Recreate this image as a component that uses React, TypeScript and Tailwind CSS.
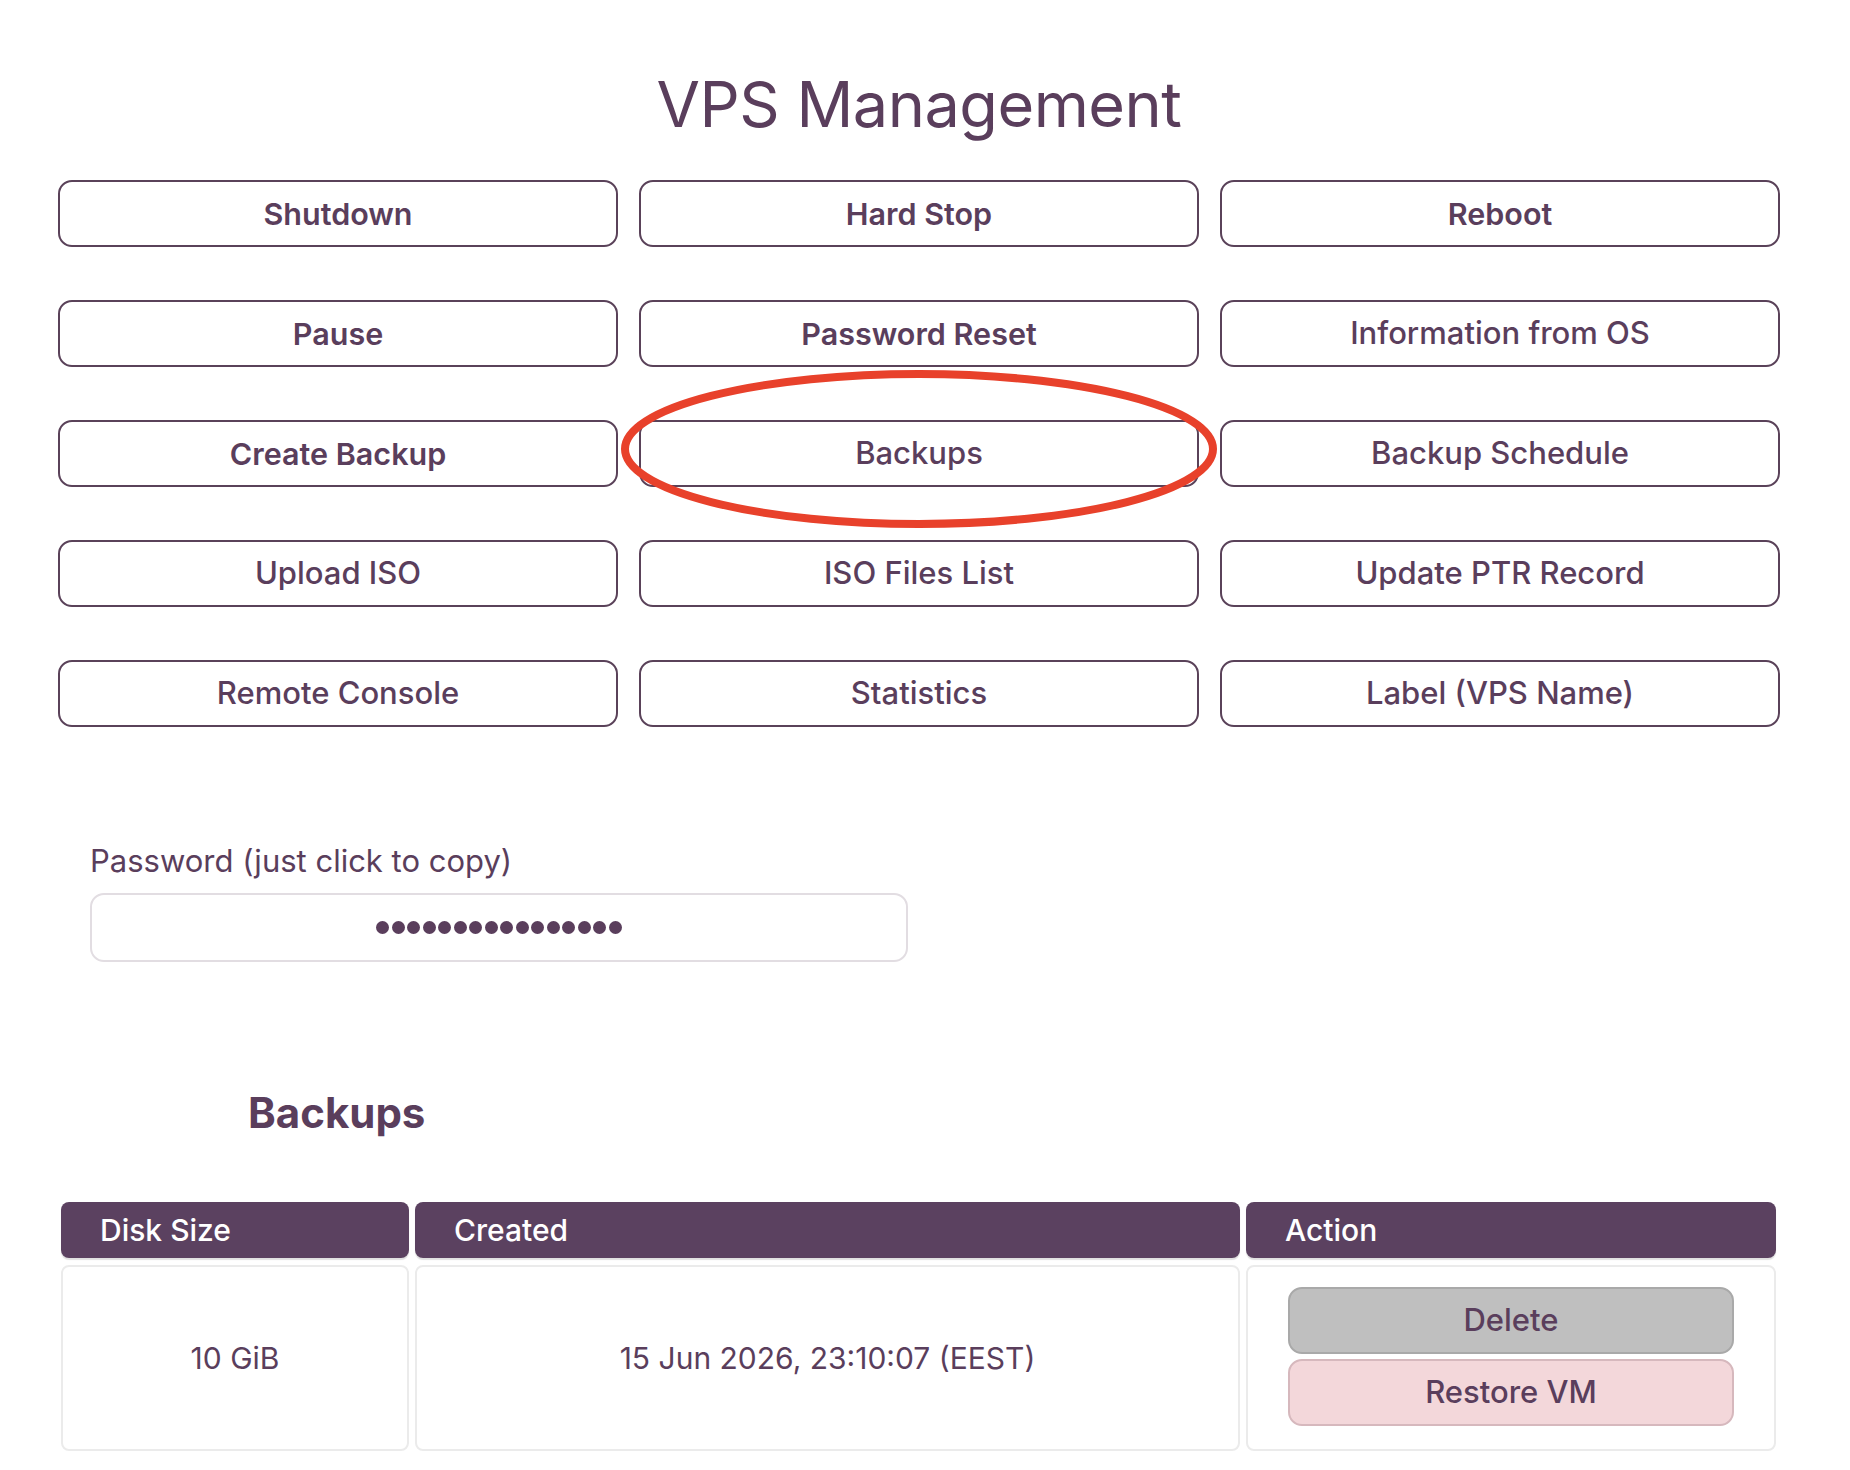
import React from 'react';

const actions = [
  { label: 'Shutdown', bold: true },
  { label: 'Hard Stop', bold: true },
  { label: 'Reboot', bold: true },
  { label: 'Pause', bold: true },
  { label: 'Password Reset', bold: true },
  { label: 'Information from OS', bold: false },
  { label: 'Create Backup', bold: true },
  { label: 'Backups', bold: false },
  { label: 'Backup Schedule', bold: false },
  { label: 'Upload ISO', bold: false },
  { label: 'ISO Files List', bold: false },
  { label: 'Update PTR Record', bold: false },
  { label: 'Remote Console', bold: false },
  { label: 'Statistics', bold: false },
  { label: 'Label (VPS Name)', bold: false },
];

const App: React.FC = () => {
  return (
    <div className="relative min-h-screen bg-white text-[#5a3e5c] font-['Inter','Noto_Sans',sans-serif]">
      <div className="flex flex-col pl-[58px] pr-[70px] pt-[66px] pb-[19px]">
        <h1 className="text-center text-[63px] leading-[77px] font-normal tracking-[-0.5px]">VPS Management</h1>

        <div className="grid grid-cols-3 gap-x-[21px] gap-y-[53px] mt-[37px]">
          {actions.map(({ label, bold }) => (
            <button
              key={label}
              className={`h-[67px] rounded-[14px] border-2 border-[#5a4259] bg-white ${
                bold ? 'text-[30.5px] font-semibold' : 'text-[31px] font-medium'
              }`}
            >
              {label}
            </button>
          ))}
        </div>

        <div className="ml-[32px] mt-[117px] w-[818px]">
          <label className="block text-[31px] leading-[34px]">Password (just click to copy)</label>
          <div className="mt-[15px] h-[69px] rounded-[14px] border-2 border-[#e2dde2] flex items-center justify-center gap-[2.5px] cursor-pointer">
            {Array.from({ length: 16 }).map((_, i) => (
              <span key={i} className="w-[13px] h-[13px] rounded-full bg-[#5a3e5c]" />
            ))}
          </div>
        </div>

        <h2 className="ml-[190px] mt-[127px] text-[42px] leading-[48px] font-bold">Backups</h2>

        <div className="ml-[3px] mt-[65px] grid grid-cols-[348px_825px_530px] gap-x-[6px] gap-y-[7px]">
          {['Disk Size', 'Created', 'Action'].map((h) => (
            <div
              key={h}
              className="h-[56px] rounded-[8px] bg-[#5b4160] text-white text-[30px] font-medium pl-[39px] flex items-center shadow-[0_2px_1px_rgba(0,0,0,0.12)]"
            >
              {h}
            </div>
          ))}
          <div className="h-[186px] rounded-[8px] border-2 border-[#ebebeb] flex items-center justify-center text-[30px]">
            10 GiB
          </div>
          <div className="h-[186px] rounded-[8px] border-2 border-[#ebebeb] flex items-center justify-center text-[30px]">
            15 Jun 2026, 23:10:07 (EEST)
          </div>
          <div className="h-[186px] rounded-[8px] border-2 border-[#ebebeb] flex flex-col justify-center gap-[5px] pl-[40px] pr-[40px] pb-[3px]">
            <button className="h-[67px] rounded-[14px] border-2 border-[#a9a9a9] bg-[#bfbfbf] text-[31px] font-medium">
              Delete
            </button>
            <button className="h-[67px] rounded-[14px] border-2 border-[#d6b8bd] bg-[#f3d7da] text-[31px] font-medium">
              Restore VM
            </button>
          </div>
        </div>
      </div>

      <svg
        className="absolute left-[614px] top-[366px] pointer-events-none"
        width="610"
        height="166"
        viewBox="0 0 610 166"
      >
        <ellipse cx="305" cy="83" rx="294" ry="75" fill="none" stroke="#e8412b" strokeWidth="8" />
      </svg>
    </div>
  );
};

export default App;
